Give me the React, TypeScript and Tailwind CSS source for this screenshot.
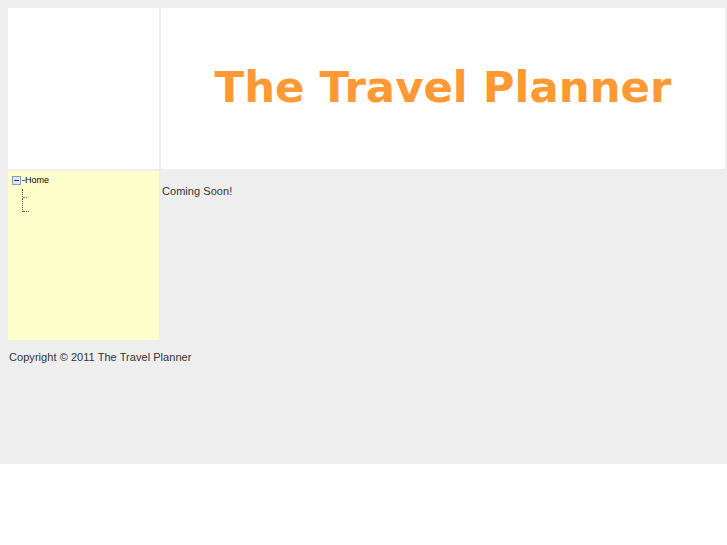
export default function App() {
  return (
    <div className="h-[464px] bg-[#eeeeee] pl-2 pt-2 font-['Liberation_Sans',Arial,sans-serif] text-[#333333]">
      <div className="grid grid-cols-[151px_564px] grid-rows-[161px_169px] gap-[2px]">
        <div className="bg-white" />
        <div className="flex items-center justify-center bg-white">
          <h1 className="-mt-px font-['DejaVu_Sans',sans-serif] text-[43.4px] font-bold leading-none text-[#ff9933]">
            The Travel Planner
          </h1>
        </div>
        <div className="bg-[#ffffcc] pl-1 pt-[4px]">
          <Tree />
        </div>
        <div className="pl-[1px] pt-[12px] text-[11px] tracking-[0.05px]">Coming Soon!</div>
      </div>
      <p className="pl-[1px] pt-[9px] text-[11px] tracking-[0.05px]">Copyright © 2011 The Travel Planner</p>
    </div>
  );
}

function Tree() {
  return (
    <div className="font-['Liberation_Sans',Arial,sans-serif] text-[9px] text-black">
      <div className="flex items-center">
        <span className="flex h-[9px] w-[9px] items-center justify-center border border-[#7f9db9] bg-[#dfe8f6]">
          <span className="h-px w-[5px] bg-[#1f3a70]" />
        </span>
        <span className="ml-px h-px w-[2px] border-t border-dotted border-[#555]" />
        <span className="ml-px leading-[11px]">Home</span>
      </div>
      <div className="ml-[10px] mt-[3px] flex flex-col">
        <div className="flex h-[10px] items-end border-l border-dotted border-[#555]">
          <span className="mb-[1px] w-[4px] border-t border-dotted border-[#777]" />
        </div>
        <div className="flex h-[13px] items-end border-l border-dotted border-[#555]">
          <span className="w-[6px] border-t border-dotted border-[#555]" />
        </div>
      </div>
    </div>
  );
}
